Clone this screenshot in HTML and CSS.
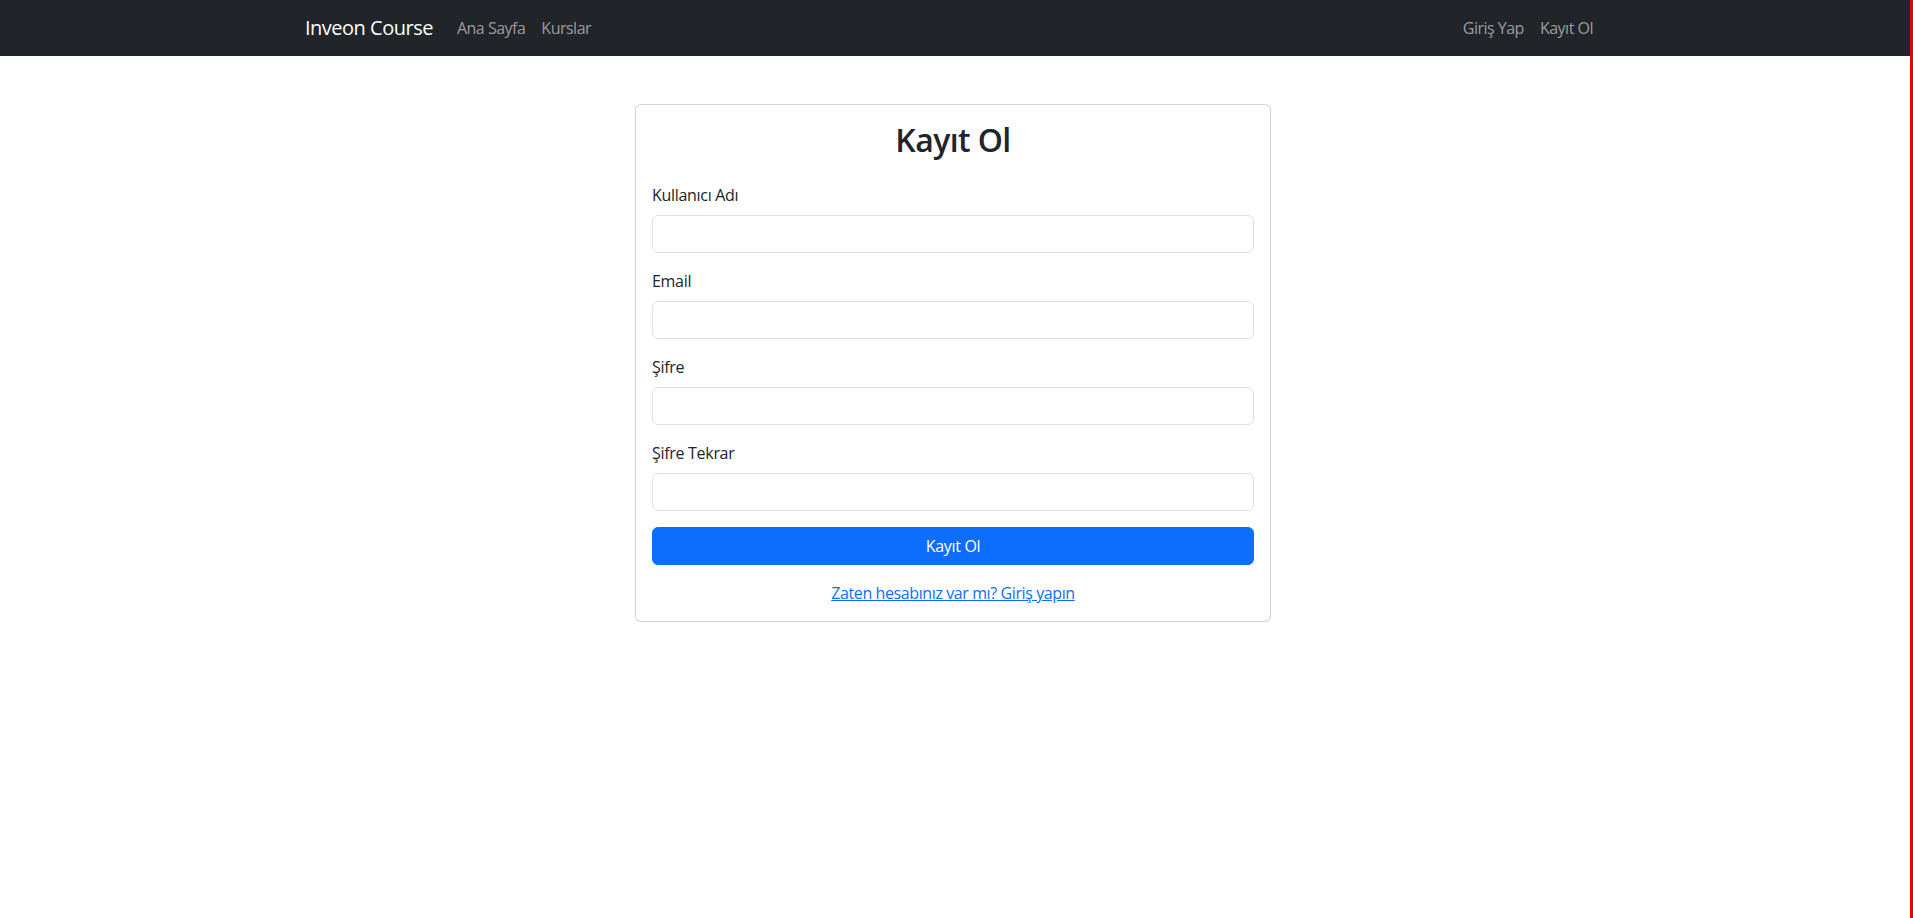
FILE: index.html
```html
<!DOCTYPE html>
<html lang="tr">
<head>
<meta charset="utf-8">
<title>Kayıt Ol - Inveon Course</title>
<link rel="stylesheet" href="styles.css">
</head>
<body>
<nav class="navbar">
  <div class="container nav-inner">
    <div class="nav-left">
      <a class="brand" href="#">Inveon Course</a>
      <ul class="nav-list">
        <li><a class="nav-link" href="#">Ana Sayfa</a></li>
        <li><a class="nav-link" href="#">Kurslar</a></li>
      </ul>
    </div>
    <ul class="nav-list">
      <li><a class="nav-link" href="#">Giriş Yap</a></li>
      <li><a class="nav-link" href="#">Kayıt Ol</a></li>
    </ul>
  </div>
</nav>
<main class="page">
  <div class="container">
    <div class="row">
      <div class="col">
        <div class="card">
          <div class="card-body">
            <h2 class="card-title">Kayıt Ol</h2>
            <form>
              <div class="field">
                <label class="form-label" for="u">Kullanıcı Adı</label>
                <input class="form-control" id="u" type="text">
              </div>
              <div class="field">
                <label class="form-label" for="e">Email</label>
                <input class="form-control" id="e" type="email">
              </div>
              <div class="field">
                <label class="form-label" for="p">Şifre</label>
                <input class="form-control" id="p" type="password">
              </div>
              <div class="field">
                <label class="form-label" for="p2">Şifre Tekrar</label>
                <input class="form-control" id="p2" type="password">
              </div>
              <button class="btn-primary" type="submit">Kayıt Ol</button>
            </form>
            <div class="login-link">
              <a href="#">Zaten hesabınız var mı? Giriş yapın</a>
            </div>
          </div>
        </div>
      </div>
    </div>
  </div>
</main>
</body>
</html>
```

FILE: styles.css
```css
html, body {
  margin: 0;
  padding: 0;
}
*, *::before, *::after {
  box-sizing: border-box;
}
body {
  min-height: 100vh;
  border-right: 3px solid #ee0000;
  background: #fff;
  color: #212529;
  font-family: "Open Sans", "Noto Sans", sans-serif;
  font-size: 16px;
  line-height: 1.5;
}
.container {
  max-width: 1320px;
  margin: 0 auto;
  padding: 0 12px;
}
.navbar {
  background: #212529;
  padding: 8px 4px 8px 0;
}
.page {
  padding-right: 4px;
}
.nav-inner {
  display: flex;
  align-items: center;
  justify-content: space-between;
}
.nav-left {
  display: flex;
  align-items: center;
}
.brand {
  color: #fff;
  font-size: 20px;
  line-height: 1.5;
  padding: 5px 0;
  margin-right: 16px;
  text-decoration: none;
  letter-spacing: -0.5px;
}
.nav-list {
  display: flex;
  list-style: none;
  margin: 0;
  padding: 0;
}
.nav-link {
  display: block;
  padding: 8px;
  color: rgba(255, 255, 255, 0.55);
  text-decoration: none;
  letter-spacing: -0.5px;
}
.row {
  display: flex;
  justify-content: center;
  margin: 0 -12px;
}
.col {
  flex: 0 0 50%;
  padding: 0 12px;
}
.card {
  margin-top: 48px;
  border: 1px solid rgba(0, 0, 0, 0.175);
  border-radius: 6px;
  background: #fff;
}
.card-body {
  padding: 16px;
}
.card-title {
  margin: 0 0 24px;
  text-align: center;
  font-size: 32px;
  font-weight: 600;
  line-height: 1.2;
  letter-spacing: -0.6px;
}
.field {
  margin-bottom: 16px;
}
.form-label {
  display: inline-block;
  margin-bottom: 8px;
  letter-spacing: -0.3px;
}
.form-control {
  display: block;
  width: 100%;
  height: 38px;
  padding: 6px 12px;
  font: inherit;
  color: #212529;
  background: #fff;
  border: 1px solid #dee2e6;
  border-radius: 6px;
  outline: none;
}
.btn-primary {
  display: block;
  width: 100%;
  height: 38px;
  padding: 6px 12px;
  font: inherit;
  letter-spacing: -0.3px;
  color: #fff;
  background: #0d6efd;
  border: 1px solid #0d6efd;
  border-radius: 6px;
  cursor: pointer;
}
.login-link {
  margin-top: 16px;
  text-align: center;
}
.login-link a {
  color: #0d6efd;
  text-decoration: underline;
  letter-spacing: -0.4px;
}
```
